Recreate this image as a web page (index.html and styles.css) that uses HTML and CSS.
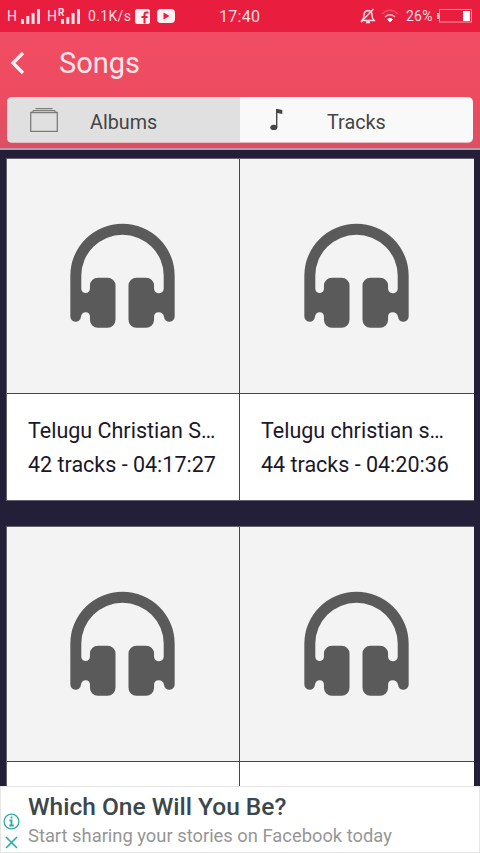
FILE: index.html
```html
<!DOCTYPE html>
<html lang="en">
<head>
<meta charset="utf-8">
<title>Songs</title>
<link rel="stylesheet" href="styles.css">
</head>
<body>
<svg class="defs" width="0" height="0" aria-hidden="true">
  <symbol id="headphones" viewBox="60 39 316 316">
    <path d="M61 318V196A157 156 0 0 1 375 196V318A16 16 0 0 1 343 320Q340 306 327 306Q313 306 313 320V329A24 24 0 0 1 289 353H260A24 24 0 0 1 236 329V226A24 24 0 0 1 260 202H289A24 24 0 0 1 313 226V235A14.5 14 0 0 0 342 235V196A124 123 0 0 0 94 196V235A13 13 0 0 0 120 235V226A24 24 0 0 1 144 202H173A24 24 0 0 1 197 226V329A24 24 0 0 1 173 353H144A24 24 0 0 1 120 329V320Q120 306 107 306Q95 306 93 320A16 16 0 0 1 61 318Z"/>
  </symbol>
</svg>
<div class="app">
  <div class="status">
    <div class="status-left">
      <span class="net">H</span>
      <svg class="bars" width="19" height="15" viewBox="0 0 19 15"><path d="M0 10h3v5H0zM5.300 7h3v8h-3zM10.600 4h3v11h-3zM16 0h3v15h-3z"/></svg>
      <span class="net net-two">H</span>
      <span class="roam"><svg class="bars" width="19" height="15" viewBox="0 0 19 15"><path d="M0 10h3v5H0zM5.300 8h3v7h-3zM10.600 4h3v11h-3zM16 0h3v15h-3z"/></svg><span class="roam-mark">R</span></span>
      <span class="rate">0.1K/s</span>
      <svg class="fb" width="15" height="15" viewBox="0 0 15 15"><rect width="15" height="15" rx="2.500" fill="#fff0f2"/><path d="M13.500 3.500H11.500Q9.500 3.500 9.500 5.500V14.500M6.500 8H12.500" fill="none" stroke="#e91d3d" stroke-width="2"/></svg>
      <svg class="yt" width="18" height="14" viewBox="0 0 18 14"><rect width="18" height="14" rx="4" fill="#fff0f2"/><path d="M6.500 3.500v7l6-3.500z" fill="#e91d3d"/></svg>
    </div>
    <div class="clock">17:40</div>
    <div class="status-right">
      <svg class="bell" width="16" height="16" viewBox="0 0 16 16" fill="none" stroke="#ffdfe4" stroke-width="1.500"><path d="M2 12.500Q4 10.500 4 7Q4 3 8 2.500Q12 3 12 7Q12 10.500 14 12.500Z"/><path d="M1 14L13.500 1"/><path d="M6 14.300h4" stroke-width="2"/></svg>
      <svg class="wifi" width="18" height="14" viewBox="0 0 18 14" fill="none" stroke-width="1.600"><path d="M1 5Q9-2.500 17 5" stroke="#f04d64"/><path d="M4 8Q9 3.500 14 8" stroke="#fbb5c0"/><path d="M6.500 10.500Q9 8.200 11.500 10.500L9 13z" fill="#fff" stroke="#fff" stroke-width="1"/></svg>
      <span class="percent">26%</span>
      <svg class="battery" width="35" height="14" viewBox="0 0 35 14"><rect x="2.500" y=".5" width="32" height="12.500" fill="none" stroke="#ff9dac"/><path d="M0 4h2v6H0z" fill="#ffb3bf"/><path d="M26 2h7v10h-7z" fill="#fff"/></svg>
    </div>
  </div>

  <header class="header">
    <div class="title-row">
      <svg class="back" width="16" height="24" viewBox="0 0 16 24"><path d="M14 2L4 12L14 22" fill="none" stroke="#fff0f1" stroke-width="3.400"/></svg>
      <h1>Songs</h1>
    </div>
    <nav class="tabs">
      <div class="tab tab-active">
        <svg class="album-icon" width="28" height="24" viewBox="0 0 28 24" fill="none" stroke="#7b7d7a"><path d="M.7 4.500h26.600v18.800H.7z" stroke-width="1.300"/><path d="M3 2.500h22M5.500.7h17M3 2.500V4M25 2.500V4" stroke-width="1.200"/></svg>
        <span class="albums-label">Albums</span>
      </div>
      <div class="tab">
        <svg class="note-icon" width="13" height="23" viewBox="0 0 13 23" fill="#454545"><ellipse cx="3.800" cy="19.400" rx="3.500" ry="2.600"/><path d="M6 1h1.400L12.300 2V6L7.400 5V19.500H6z"/></svg>
        <span class="tracks-label">Tracks</span>
      </div>
    </nav>
  </header>

  <main class="list">
    <section class="row">
      <article class="card"><div class="cover"><svg class="phones"><use href="#headphones"/></svg></div><div class="info"><p class="name">Telugu Christian S…</p><p class="meta">42 tracks - 04:17:27</p></div></article>
      <article class="card"><div class="cover"><svg class="phones"><use href="#headphones"/></svg></div><div class="info"><p class="name">Telugu christian s…</p><p class="meta">44 tracks - 04:20:36</p></div></article>
    </section>
    <section class="row">
      <article class="card"><div class="cover"><svg class="phones"><use href="#headphones"/></svg></div><div class="info"></div></article>
      <article class="card"><div class="cover"><svg class="phones"><use href="#headphones"/></svg></div><div class="info"></div></article>
    </section>
  </main>

  <aside class="ad">
    <div class="ad-icons">
      <svg width="17" height="17" viewBox="0 0 17 17" fill="none" stroke="#2fa9a5"><circle cx="8.500" cy="8.500" r="7.400" stroke-width="1.300"/><path d="M8.500 3.500v2M6.500 7.500h2v5M6.300 12.500h4.400" stroke-width="1.800"/></svg>
      <svg width="13" height="13" viewBox="0 0 13 13" stroke="#2fa9a5" stroke-width="1.600"><path d="M1 1L12 12M12 1L1 12"/></svg>
    </div>
    <div class="ad-copy">
      <p class="ad-title">Which One Will You Be?</p>
      <p class="ad-text">Start sharing your stories on Facebook today</p>
    </div>
  </aside>
</div>
</body>
</html>
```
FILE: styles.css
```css
* { box-sizing: border-box; }
body { margin: 0; font-family: Roboto, "Liberation Sans", sans-serif; }
p, h1 { margin: 0; font-weight: 400; white-space: nowrap; }
svg { display: block; flex: none; }
.defs { position: absolute; }
.app { width: 480px; height: 853px; overflow: hidden; display: flex; flex-direction: column; background: #241f39; }

.status { flex: none; height: 32px; display: grid; grid-template-columns: 219px 1fr auto; align-items: center; padding-right: 8px; background: #e91d3d; color: #ffdfe4; font-size: 14px; }
.status-left { display: flex; align-items: center; padding-left: 7px; }
.net { width: 14px; font-size: 14px; }
.net-two { margin-left: 7px; }
.bars { fill: #ffdfe4; }
.roam { position: relative; }
.roam-mark { position: absolute; left: -3px; top: -1px; font-size: 10px; line-height: 9px; font-weight: 700; }
.rate { width: 47px; margin-left: 8px; font-size: 14px; letter-spacing: .35px; }
.yt { margin-left: 7px; }
.clock { font-size: 16px; letter-spacing: .3px; padding-top: 1px; }
.status-right { display: flex; align-items: center; }
.wifi { margin-left: 5px; }
.percent { width: 27px; margin: 0 4px 0 7px; letter-spacing: .2px; }
.bell { margin-left: 3px; }

.header { flex: none; height: 118px; padding: 0 7px; background: linear-gradient(#f04d64, #ed4b60 55%, #dc5064); border-bottom: 2px solid #b79aae; }
.title-row { height: 65px; display: flex; align-items: center; padding: 0 0 4px 2px; }
.title-row h1 { margin-left: 34px; font-size: 29px; line-height: 36px; color: #ffe6e8; }
.tabs { height: 46px; display: grid; grid-template-columns: 233px 1fr; border-radius: 5px; overflow: hidden; background: #f9f9f9; border-bottom: 1px solid #e8b9bf; }
.tab { display: flex; align-items: center; font-size: 19.800px; color: #454545; }
.tab-active { background: #e0e0e0; }
.tab span { padding-top: 5px; }
.album-icon { margin-left: 23px; }
.albums-label { margin-left: 32px; }
.note-icon { margin-left: 30px; }
.tracks-label { margin-left: 44px; }

.list { flex: 1; min-height: 0; overflow: hidden; padding: 8px 6px 0; display: flex; flex-direction: column; gap: 25px; }
.row { flex: none; width: 468px; height: 343px; display: grid; grid-template-columns: 232px 235px; border: 1px solid #65616e; border-right: 0; }
.card { display: flex; flex-direction: column; min-width: 0; background: #fff; }
.card + .card { border-left: 1px solid #454545; }
.cover { height: 235px; padding-top: 64px; background: #f3f3f3; border-bottom: 1px solid #454545; }
.phones { width: 105px; height: 106px; margin-left: 63px; fill: #5a5a5a; }
.card + .card .phones { margin-left: 63.500px; }
.info { flex: 1; padding: 20px 0 0 21px; color: #1b182a; font-size: 21.500px; line-height: 33px; }
.meta { padding-top: 1px; }

.ad { flex: none; height: 67px; display: flex; background: #fff; border: 1px solid #e6e6e6; }
.ad-icons { width: 27px; display: flex; flex-direction: column; align-items: center; gap: 6px; padding: 26px 6px 0 0; }
.ad-title { padding-top: 6px; font-size: 24.500px; line-height: 28px; font-weight: 500; color: #3c474c; }
.ad-text { padding-top: 3px; font-size: 18.350px; line-height: 24px; color: #969696; }
```
